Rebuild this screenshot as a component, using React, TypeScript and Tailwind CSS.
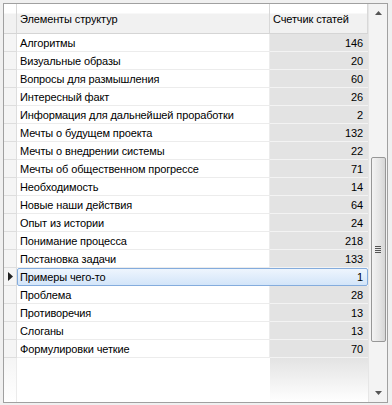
import React from "react";

const rows: [string, number][] = [
  ["Алгоритмы", 146],
  ["Визуальные образы", 20],
  ["Вопросы для размышления", 60],
  ["Интересный факт", 26],
  ["Информация для дальнейшей проработки", 2],
  ["Мечты о будущем проекта", 132],
  ["Мечты о внедрении системы", 22],
  ["Мечты об общественном прогрессе", 71],
  ["Необходимость", 14],
  ["Новые наши действия", 64],
  ["Опыт из истории", 24],
  ["Понимание процесса", 218],
  ["Постановка задачи", 133],
  ["Примеры чего-то", 1],
  ["Проблема", 28],
  ["Противоречия", 13],
  ["Слоганы", 13],
  ["Формулировки четкие", 70],
];

const SEL = 13;

export default function App() {
  return (
    <div
      className="w-[392px] h-[405px] bg-[#f0f0f0] pt-[3px] pl-[3px] pr-[4px] pb-[2px] text-[11px] text-black tracking-[-0.12px]"
      style={{ fontFamily: '"Liberation Sans", Arial, sans-serif' }}
    >
      <div className="h-full border border-[#a0a0a0] bg-white flex">
        <div className="flex-1 flex flex-col">
          {/* header */}
          <div className="h-[30px] flex border-b border-[#d5d5d5] bg-[linear-gradient(to_bottom,#ffffff_0px,#ffffff_9px,#f1f1f1_10px,#f1f1f1_100%)]">
            <div className="w-[13px] border-r border-[#d8d8d8]" />
            <div className="w-[253px] border-r border-[#d8d8d8] flex items-center pl-[3px] pt-[1px]">
              Элементы структур
            </div>
            <div className="flex-1 border-r border-[#d8d8d8] flex items-center pl-[3px] pt-[1px]">
              Счетчик статей
            </div>
          </div>
          {/* rows */}
          {rows.map(([name, n], i) => {
            const sel = i === SEL;
            return (
              <div key={name} className="h-[18px] flex">
                <div className="w-[13px] border-r border-b border-[#dedede] bg-[#f5f5f5] flex items-center justify-center">
                  {sel && (
                    <svg width="5" height="9" viewBox="0 0 5 9">
                      <path d="M0 0 L5 4.5 L0 9 Z" fill="#222" />
                    </svg>
                  )}
                </div>
                {sel ? (
                  <div className="flex-1 flex rounded-[2px] border border-[#84acdd] bg-[linear-gradient(to_bottom,#eef5fd,#d3e5f9)]">
                    <div className="w-[252px] flex items-center pl-[2px] pt-[1px] leading-none">{name}</div>
                    <div className="flex-1 flex items-center justify-end pr-[4px] pt-[1px] leading-none">{n}</div>
                  </div>
                ) : (
                  <>
                    <div className="w-[253px] border-r border-b border-[#ececec] flex items-center pl-[3px] pt-[1px] leading-none">
                      {name}
                    </div>
                    <div className="flex-1 border-b border-[#f3f3f3] bg-[#e3e3e3] flex items-center justify-end pr-[5px] pt-[1px] leading-none">
                      {n}
                    </div>
                  </>
                )}
              </div>
            );
          })}
          {/* empty area */}
          <div className="flex-1 flex">
            <div className="w-[13px] border-r border-[#ebebeb] bg-[linear-gradient(to_bottom,#f5f5f5,#ffffff)]" />
            <div className="w-[253px]" />
            <div className="flex-1 bg-[linear-gradient(to_bottom,#e3e3e3,#ffffff)]" />
          </div>
        </div>
        {/* scrollbar */}
        <div className="w-[19px] bg-[#f3f3f3] border-l border-[#e6e6e6] flex flex-col items-center">
          <div className="h-[18px] w-full flex items-center justify-center">
            <svg width="7" height="4" viewBox="0 0 7 4">
              <path d="M3.5 0 L7 4 L0 4 Z" fill="#555" />
            </svg>
          </div>
          <div className="h-[135px]" />
          <div className="w-[15px] h-[185px] rounded-[2px] border border-[#979797] bg-[linear-gradient(to_right,#f3f3f3,#e4e4e4_60%,#d6d6d6)] flex items-center justify-center">
            <div className="flex flex-col gap-[1px]">
              <div className="w-[6px] h-[1px] bg-[#555]" />
              <div className="w-[6px] h-[1px] bg-[#555]" />
              <div className="w-[6px] h-[1px] bg-[#555]" />
              <div className="w-[6px] h-[1px] bg-[#555]" />
            </div>
          </div>
          <div className="flex-1" />
          <div className="h-[18px] w-full flex items-center justify-center">
            <svg width="7" height="4" viewBox="0 0 7 4">
              <path d="M0 0 L7 0 L3.5 4 Z" fill="#555" />
            </svg>
          </div>
        </div>
      </div>
    </div>
  );
}
